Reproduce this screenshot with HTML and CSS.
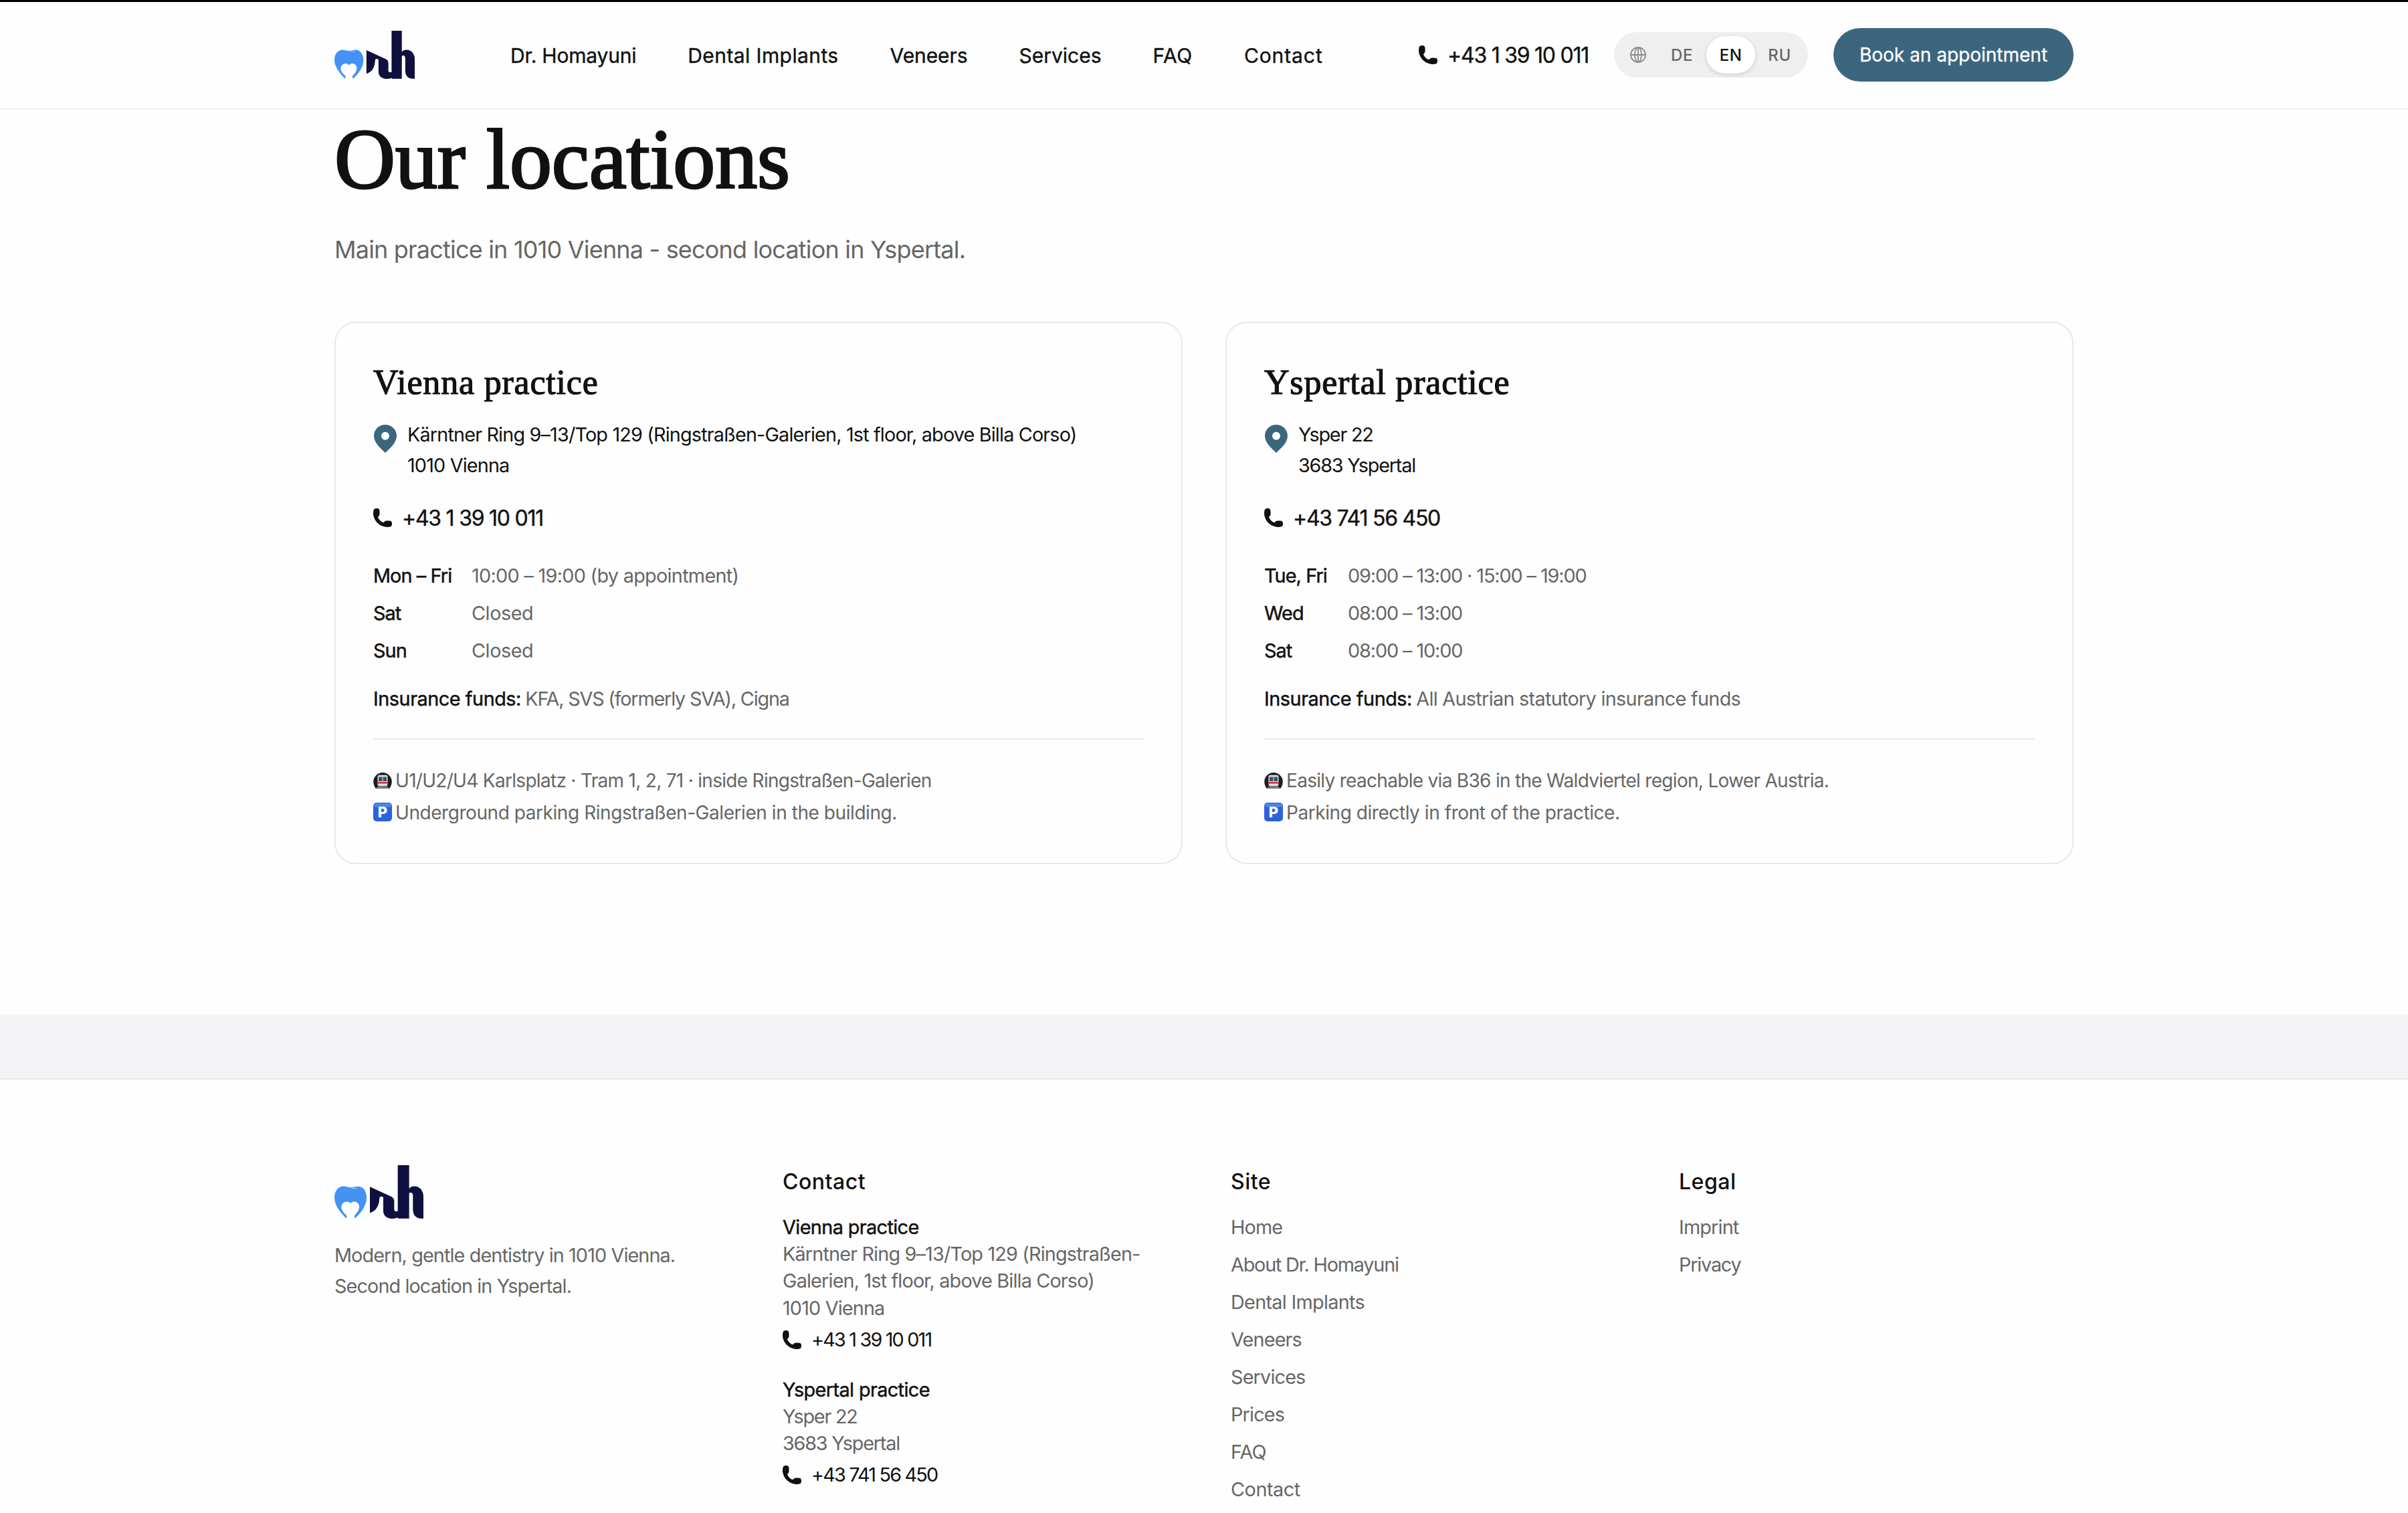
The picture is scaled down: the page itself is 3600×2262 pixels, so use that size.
FILE: index.html
```html
<!DOCTYPE html>
<html lang="en">
<head>
    <meta charset="UTF-8">
    <meta name="viewport" content="width=device-width, initial-scale=1.0">
    <title>Our locations</title>
    <link rel="stylesheet" href="styles.css">
</head>
<body>

    <!-- Shared icons -->
    <svg class="sprite" aria-hidden="true">
        <symbol id="logo" viewBox="30 36 399 238" preserveAspectRatio="none">
            <path fill="#4492f3" d="M82 272C60 250 30 215 30 180C30 150 48 130 70 130C85 130 92 136 105 135C118 133 130 129 142 131C162 134 174 155 174 182C174 215 150 248 123 272C118 268 118 262 122 257C134 245 142 232 141 218C139 204 128 197 117 198C109 199 106 202 102 206C98 202 94 198 86 198C72 198 62 208 61 221C60 235 72 248 82 257C87 262 86 268 82 272Z"/>
            <path fill="none" stroke="#fff" stroke-width="2" d="M108 138q12 3 23-2"/>
            <path fill="#0f0f40" d="M189 132L285 176C293 180 298 186 298 196V232C298 240 302 241 308 241H314V36H365V140C371 132 380 129 392 130C418 133 429 155 429 175V273C400 275 383 262 382 235V172C382 160 375 155 365 160V273H315V269C300 275 283 275 272 271C258 266 249 255 249 238V182C249 174 234 172 232 182C231 215 218 240 189 248Z"/>
        </symbol>
        <symbol id="phone" viewBox="0 0 28 28">
            <path d="M1.5 1C4-.5 7.5-.3 8.8 1.5C9.8 3 9.8 8 9.3 10C9 11.5 7.5 12 7 13C8 16.5 11.5 20 15 21.3C16 20.8 16.5 19.3 18 18.9C20 18.4 25 18.4 26.6 19.2C28.4 20.3 28.4 24 27.2 26.5C25.5 28.3 20 28.3 17 27.6C8 25.5 1.5 18.5.2 10C-.2 7 0 3 1.5 1Z"/>
        </symbol>
        <symbol id="pin" viewBox="0 0 34 42">
            <path fill-rule="evenodd" d="M17 0C7.600 0 0 7.300 0 16.500C0 26 8 33.500 17 42C26 33.500 34 26 34 16.500C34 7.300 26.400 0 17 0ZM17 10.700a6 6 0 1 1 0 12a6 6 0 1 1 0-12Z"/>
        </symbol>
        <symbol id="train" viewBox="0 0 28 24">
            <path fill="#1d1d1f" d="M4 24C-1 18-1 9 4 4.500C9-1.500 19-1.500 24 4.500C29 9 29 18 24 24Z"/>
            <path fill="#77787c" d="M4 24l3-3.500h14l3 3.500Z"/>
            <rect x="6.500" y="3.800" width="15" height="16.500" rx="3" fill="#dedfe2"/>
            <rect x="8" y="6.500" width="12" height="6.500" fill="#37536f"/>
            <rect x="13.500" y="6.500" width="1" height="6.500" fill="#dedfe2"/>
            <rect x="6.500" y="14" width="15" height="2.600" fill="#d8303e"/>
        </symbol>
        <symbol id="parking" viewBox="0 0 28 28">
            <rect width="28" height="28" rx="5" fill="#2a62d9"/>
            <path fill="#4a88e4" d="M5 1h18q4 0 4 4v1q-13 2-26 0v-1q0-4 4-4Z"/>
        </symbol>
    </svg>

    <header class="header">
        <div class="container header-inner">
            <svg class="logo"><use href="#logo"/></svg>
            <nav class="nav">
                <a>Dr. Homayuni</a>
                <a>Dental Implants</a>
                <a>Veneers</a>
                <a>Services</a>
                <a>FAQ</a>
                <a>Contact</a>
            </nav>
            <div class="actions">
                <a class="phone"><svg class="phone-icon"><use href="#phone"/></svg>+43 1 39 10 011</a>
                <div class="lang">
                    <span class="globe">
                        <svg viewBox="0 0 24 24">
                            <circle cx="12" cy="12" r="11"/>
                            <ellipse cx="12" cy="12" rx="5" ry="11"/>
                            <path d="M1 12h22M12 1v22"/>
                        </svg>
                    </span>
                    <a>DE</a>
                    <a class="active">EN</a>
                    <a>RU</a>
                </div>
                <a class="btn">Book an appointment</a>
            </div>
        </div>
    </header>

    <main class="container locations">
        <h1>Our locations</h1>
        <p class="lead">Main practice in 1010 Vienna - second location in Yspertal.</p>

        <div class="cards">
            <section class="card">
                <h2>Vienna practice</h2>
                <div class="address">
                    <svg class="pin"><use href="#pin"/></svg>
                    <p>Kärntner Ring 9–13/Top 129 (Ringstraßen-Galerien, 1st floor, above Billa Corso)<br>1010 Vienna</p>
                </div>
                <a class="phone"><svg class="phone-icon"><use href="#phone"/></svg>+43 1 39 10 011</a>
                <dl class="hours hours-vienna">
                    <dt>Mon – Fri</dt><dd class="ls-md">10:00 – 19:00 (by appointment)</dd>
                    <dt>Sat</dt><dd class="ls-sm">Closed</dd>
                    <dt>Sun</dt><dd class="ls-sm">Closed</dd>
                </dl>
                <p class="insurance"><strong>Insurance funds:</strong> <span class="ls-xl">KFA, SVS (formerly SVA), Cigna</span></p>
                <div class="access">
                    <p class="ls-md"><svg class="train"><use href="#train"/></svg>U1/U2/U4 Karlsplatz · Tram 1, 2, 71 · inside Ringstraßen-Galerien</p>
                    <p class="ls-sm"><span class="parking"><svg><use href="#parking"/></svg><b>P</b></span>Underground parking Ringstraßen-Galerien in the building.</p>
                </div>
            </section>

            <section class="card">
                <h2>Yspertal practice</h2>
                <div class="address">
                    <svg class="pin"><use href="#pin"/></svg>
                    <p class="ls-xl">Ysper 22<br>3683 Yspertal</p>
                </div>
                <a class="phone"><svg class="phone-icon"><use href="#phone"/></svg>+43 741 56 450</a>
                <dl class="hours hours-yspertal">
                    <dt>Tue, Fri</dt><dd>09:00 – 13:00 · 15:00 – 19:00</dd>
                    <dt>Wed</dt><dd>08:00 – 13:00</dd>
                    <dt>Sat</dt><dd>08:00 – 10:00</dd>
                </dl>
                <p class="insurance"><strong>Insurance funds:</strong> <span class="ls-md">All Austrian statutory insurance funds</span></p>
                <div class="access">
                    <p class="ls-md"><svg class="train"><use href="#train"/></svg>Easily reachable via B36 in the Waldviertel region, Lower Austria.</p>
                    <p class="ls-sm"><span class="parking"><svg><use href="#parking"/></svg><b>P</b></span>Parking directly in front of the practice.</p>
                </div>
            </section>
        </div>
    </main>

    <div class="band"></div>

    <footer class="footer">
        <div class="container footer-grid">
            <div class="about">
                <svg class="logo logo-large"><use href="#logo"/></svg>
                <p>Modern, gentle dentistry in 1010 Vienna.<br>Second location in Yspertal.</p>
            </div>
            <div>
                <h3>Contact</h3>
                <div class="contact">
                    <strong>Vienna practice</strong>
                    <p>Kärntner Ring 9–13/Top 129 (Ringstraßen-<br>Galerien, 1st floor, above Billa Corso)<br>1010 Vienna</p>
                    <a class="phone"><svg class="phone-icon"><use href="#phone"/></svg>+43 1 39 10 011</a>
                </div>
                <div class="contact">
                    <strong>Yspertal practice</strong>
                    <p class="ls-xl">Ysper 22<br>3683 Yspertal</p>
                    <a class="phone"><svg class="phone-icon"><use href="#phone"/></svg>+43 741 56 450</a>
                </div>
            </div>
            <div>
                <h3>Site</h3>
                <ul class="links">
                    <li>Home</li>
                    <li class="ls-xl">About Dr. Homayuni</li>
                    <li class="ls-md">Dental Implants</li>
                    <li>Veneers</li>
                    <li>Services</li>
                    <li>Prices</li>
                    <li>FAQ</li>
                    <li class="ls-sm">Contact</li>
                </ul>
            </div>
            <div>
                <h3>Legal</h3>
                <ul class="links">
                    <li>Imprint</li>
                    <li class="ls-xl">Privacy</li>
                </ul>
            </div>
        </div>
    </footer>

</body>
</html>
```
FILE: styles.css
```css
* {
    margin: 0;
    padding: 0;
    box-sizing: border-box;
}
body {
    background: #fefefe;
    color: #111;
    font-family: Inter, "Liberation Sans", sans-serif;
    font-size: 28.8px;
    letter-spacing: -0.84px;
    overflow: hidden;
}
svg {
    display: block;
    flex: none;
}
.sprite {
    display: none;
}
.container {
    width: 2600px;
    margin: 0 auto;
}

/* Letter spacing */
.ls-sm { letter-spacing: -0.44px !important; }
.ls-md { letter-spacing: -0.7px !important; }
.ls-xl { letter-spacing: -1.2px !important; }

/* Header */
.header {
    height: 164px;
    border-top: 3px solid #000;
    border-bottom: 2px solid #efefef;
    background: #fefefe;
}
.header-inner {
    height: 100%;
    display: flex;
    align-items: center;
    padding-bottom: 1px;
}
.logo {
    width: 120px;
    height: 72px;
}
.nav {
    display: flex;
    gap: 77px;
    margin: 2px 0 0 143px;
    font-size: 30px;
    white-space: nowrap;
    -webkit-text-stroke: 0.4px #111;
}
.nav a:nth-child(1) { letter-spacing: -0.2px; }
.nav a:nth-child(2) { letter-spacing: 0.4px; }
.nav a:nth-child(3) { letter-spacing: -0.1px; }
.nav a:nth-child(4) { letter-spacing: 0; }
.nav a:nth-child(5) { letter-spacing: 0.6px; }
.nav a:nth-child(6) { letter-spacing: 0.9px; }
.actions {
    display: flex;
    align-items: center;
    gap: 38px;
    margin-left: auto;
}
.phone {
    display: flex;
    align-items: center;
    gap: 15px;
    height: 40px;
    font-size: 32px;
    letter-spacing: -1.25px;
    white-space: nowrap;
    -webkit-text-stroke: 0.4px #111;
}
.phone-icon {
    width: 28px;
    height: 28px;
    fill: #111;
}
.lang {
    display: flex;
    align-items: center;
    width: 290px;
    height: 68px;
    padding: 6px;
    border-radius: 34px;
    background: #efefef;
    color: #666;
    font-size: 24px;
    font-weight: 500;
    letter-spacing: 0.5px;
}
.lang a {
    width: 73px;
    height: 56px;
    line-height: 57px;
    border-radius: 28px;
    text-align: center;
}
.lang .active {
    background: #fff;
    color: #111;
    box-shadow: 0 2px 6px rgba(0, 0, 0, 0.14);
}
.globe {
    width: 59px;
    display: flex;
    justify-content: center;
}
.globe svg {
    width: 24px;
    height: 24px;
    fill: none;
    stroke: #8c8c8c;
    stroke-width: 1.8;
}
.btn {
    width: 359px;
    height: 80px;
    line-height: 81px;
    border-radius: 40px;
    background: #3b667d;
    color: #fff;
    font-size: 28px;
    letter-spacing: 0;
    text-align: center;
    -webkit-text-stroke: 0.3px #fff;
}

/* Locations */
.locations {
    padding: 5px 0 224px;
}
h1, h2 {
    font-family: "Liberation Serif", serif;
    font-weight: 400;
    -webkit-text-stroke: 1.2px #111;
}
h1 {
    margin-bottom: 35px;
    font-size: 126px;
    line-height: 140px;
    letter-spacing: -0.1px;
    -webkit-text-stroke-width: 3px;
}
.lead {
    margin-bottom: 79px;
    color: #666;
    font-size: 36px;
    line-height: 58px;
    letter-spacing: -0.8px;
}
.cards {
    display: grid;
    grid-template-columns: 1fr 1fr;
    gap: 64px;
}
.card {
    height: 811px;
    padding: 58px 56px 0;
    border: 2px solid #e8e8e8;
    border-radius: 32px;
}
h2 {
    font-size: 52px;
    line-height: 61px;
    letter-spacing: 0.8px;
}
.address {
    display: flex;
    gap: 16px;
    margin-top: 25px;
    line-height: 46px;
}
.pin {
    width: 34px;
    height: 42px;
    margin: 8px 0 0 1px;
    fill: #3b667d;
}
.card .phone {
    margin-top: 35px;
}
.hours {
    display: grid;
    margin-top: 39px;
    line-height: 56px;
    letter-spacing: -1.1px;
}
.hours-vienna {
    grid-template-columns: 147px 1fr;
}
.hours-yspertal {
    grid-template-columns: 125px 1fr;
}
.hours dt, strong {
    color: #111;
    font-weight: 400;
    -webkit-text-stroke: 0.5px #111;
}
.hours dt {
    letter-spacing: -0.9px;
}
.hours dd, .insurance, .access {
    color: #666;
}
.insurance {
    margin: 21px 0 36px;
    line-height: 46px;
}
.insurance strong {
    margin-right: -1px;
    letter-spacing: -0.45px;
}
.access {
    padding-top: 37px;
    border-top: 2px solid #e8e8e8;
    font-size: 28px;
    line-height: 48px;
}
.access p {
    display: flex;
    align-items: center;
    gap: 5px;
}
.train {
    width: 28px;
    height: 24px;
}
.parking {
    display: grid;
    width: 28px;
    height: 28px;
    margin-top: -2px;
}
.parking svg, .parking b {
    grid-area: 1 / 1;
    width: 28px;
    height: 28px;
}
.parking b {
    position: relative;
    color: #fff;
    font-size: 22px;
    font-weight: 800;
    line-height: 28px;
    letter-spacing: 0;
    text-align: center;
}

/* Footer */
.band {
    height: 96px;
    background: #f4f4f6;
}
.footer {
    padding-top: 128px;
    border-top: 2px solid #e8e8e8;
}
.footer-grid {
    display: grid;
    grid-template-columns: repeat(4, 590px);
    gap: 80px;
}
.logo-large {
    width: 133px;
    height: 80px;
}
.about p {
    margin-top: 32px;
    color: #666;
    line-height: 46px;
    letter-spacing: -0.9px;
}
h3 {
    padding-top: 1px;
    font-size: 32px;
    font-weight: 500;
    line-height: 48px;
    letter-spacing: 0.5px;
}
.contact {
    margin-top: 24px;
    line-height: 40.2px;
}
.contact + .contact {
    margin-top: 32px;
}
.contact strong {
    display: block;
    letter-spacing: -0.6px;
}
.contact p {
    color: #666;
}
.contact .phone {
    height: 46px;
    margin-top: 4px;
    font-size: 28.8px;
    letter-spacing: -1.82px;
    -webkit-text-stroke: 0;
}
.links {
    margin-top: 16px;
    color: #666;
    line-height: 56px;
    list-style: none;
}
```
